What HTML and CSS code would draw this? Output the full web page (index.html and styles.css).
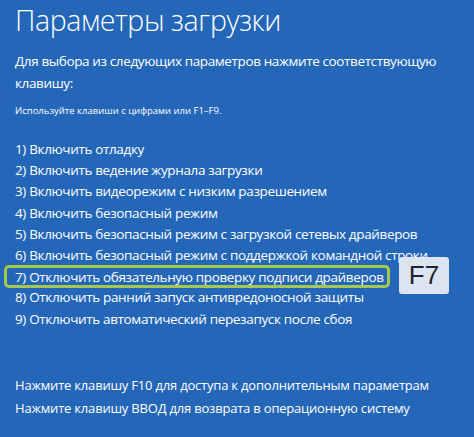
FILE: index.html
```html
<!DOCTYPE html>
<html lang="ru">
<head>
<meta charset="utf-8">
<link rel="stylesheet" href="styles.css">
</head>
<body>
<div class="screen">
  <h1 class="title">Параметры загрузки</h1>
  <p class="lead">Для выбора из следующих параметров нажмите соответствующую клавишу:</p>
  <p class="hint">Используйте клавиши с цифрами или F1–F9.</p>
  <ol class="options">
    <li>1) Включить отладку</li>
    <li>2) Включить ведение журнала загрузки</li>
    <li>3) Включить видеорежим с низким разрешением</li>
    <li>4) Включить безопасный режим</li>
    <li>5) Включить безопасный режим с загрузкой сетевых драйверов</li>
    <li>6) Включить безопасный режим с поддержкой командной строки</li>
    <li class="picked"><span class="frame">7) Отключить обязательную проверку подписи драйверов</span><span class="key">F7</span></li>
    <li>8) Отключить ранний запуск антивредоносной защиты</li>
    <li>9) Отключить автоматический перезапуск после сбоя</li>
  </ol>
  <div class="footer">
    <p>Нажмите клавишу F10 для доступа к дополнительным параметрам</p>
    <p>Нажмите клавишу ВВОД для возврата в операционную систему</p>
  </div>
</div>
</body>
</html>
```
FILE: styles.css
```css
html, body {
  margin: 0;
  padding: 0;
}
body {
  width: 474px;
  height: 437px;
  overflow: hidden;
  background: #2466b8;
  font-family: "Open Sans", "Noto Sans", sans-serif;
  color: #ffffff;
}
.screen {
  display: flex;
  flex-direction: column;
  height: 437px;
  padding: 0 0 0 15px;
  box-sizing: border-box;
}
.title {
  margin: 2px 0 0 0;
  font-size: 28.5px;
  font-weight: 300;
  line-height: 36px;
  letter-spacing: -0.4px;
}
.lead {
  margin: 12px 0 0 0;
  width: 440px;
  font-size: 13.5px;
  letter-spacing: -0.38px;
  line-height: 22px;
}
.hint {
  margin: 10px 0 0 0;
  font-size: 9.5px;
  line-height: 14px;
}
.options {
  list-style: none;
  margin: 21px 0 0 0;
  padding: 0;
  font-size: 13.5px;
  letter-spacing: -0.35px;
}
.options li {
  height: 21.2px;
  line-height: 21.2px;
  white-space: nowrap;
}
.picked {
  position: relative;
}
.frame {
  display: inline-block;
  margin-left: -11px;
  padding: 0 3px 0 8px;
  height: 23px;
  line-height: 19px;
  border: 3px solid #a6c84c;
  border-radius: 5px;
  box-sizing: border-box;
  position: relative;
  top: -1px;
}
.key {
  position: absolute;
  left: 384px;
  top: -9px;
  width: 50px;
  height: 37px;
  background: #dbe4f0;
  border-radius: 3px;
  color: #1c2430;
  font-family: "Liberation Sans", Arial, sans-serif;
  font-size: 26px;
  letter-spacing: 0;
  line-height: 37px;
  text-align: center;
}
.footer {
  margin-top: auto;
  margin-bottom: 17px;
  font-size: 13px;
  letter-spacing: -0.2px;
}
.footer p {
  margin: 0;
  line-height: 23px;
  white-space: nowrap;
}
```
